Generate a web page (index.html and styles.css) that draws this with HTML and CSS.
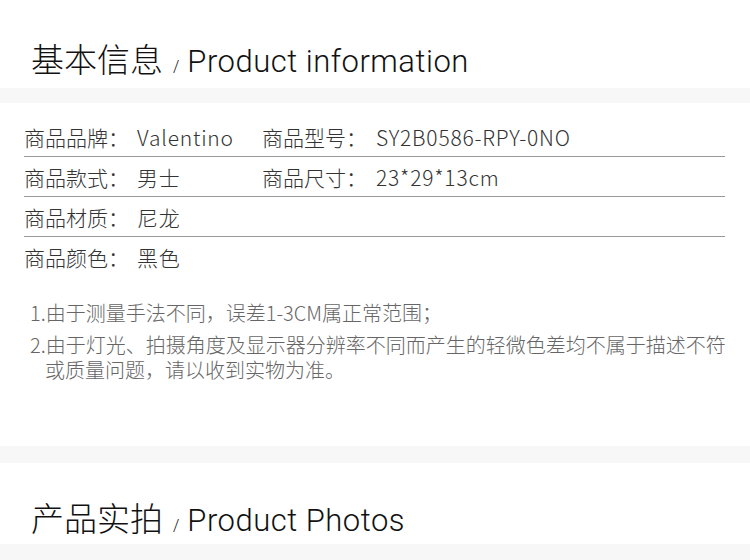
FILE: index.html
```html
<!DOCTYPE html>
<html lang="zh-CN">
<head>
<meta charset="utf-8">
<title>Product information</title>
<link rel="stylesheet" href="styles.css">
</head>
<body>
<section class="head head-first">
  <h2 class="title"><span class="cn">基本信息</span><span class="slash">/</span><span class="en">Product information</span></h2>
</section>
<div class="band band-a"></div>
<div class="specs">
  <div class="row">
    <span class="label">商品品牌：</span><span class="value">Valentino</span>
    <span class="label">商品型号：</span><span class="value">SY2B0586-RPY-0NO</span>
  </div>
  <div class="row">
    <span class="label">商品款式：</span><span class="value">男士</span>
    <span class="label">商品尺寸：</span><span class="value">23*29*13cm</span>
  </div>
  <div class="row">
    <span class="label">商品材质：</span><span class="value">尼龙</span>
  </div>
  <div class="row last">
    <span class="label">商品颜色：</span><span class="value">黑色</span>
  </div>
</div>
<div class="notes">
  <p class="note">1.由于测量手法不同，误差1-3CM属正常范围；</p>
  <p class="note">2.由于灯光、拍摄角度及显示器分辨率不同而产生的轻微色差均不属于描述不符或质量问题，请以收到实物为准。</p>
</div>
<div class="band band-b"></div>
<section class="head head-second">
  <h2 class="title"><span class="cn">产品实拍</span><span class="slash">/</span><span class="en">Product Photos</span></h2>
</section>
<div class="band band-c"></div>
</body>
</html>
```
FILE: styles.css
```css
html, body {
  margin: 0;
  padding: 0;
  background: #fff;
}
body {
  width: 750px;
  height: 560px;
  overflow: hidden;
  font-family: "Noto Sans CJK SC", "Noto Sans", sans-serif;
  color: #333;
}
.head {
  display: flex;
  align-items: flex-end;
  padding-left: 31px;
  box-sizing: border-box;
}
.head-first {
  height: 88px;
  padding-bottom: 8px;
}
.head-second {
  height: 81px;
  padding-bottom: 5px;
}
.title {
  margin: 0;
  font-weight: normal;
  display: flex;
  align-items: baseline;
  color: #111;
  line-height: 1.2;
}
.title .cn {
  font-family: "Noto Sans CJK SC", sans-serif;
  font-size: 33px;
  font-weight: 300;
}
.title .slash {
  font-family: Roboto, sans-serif;
  font-weight: 300;
  font-size: 16px;
  margin: 0 8px 0 10px;
}
.title .en {
  font-family: Roboto, sans-serif;
  font-weight: 300;
  font-size: 31px;
  letter-spacing: 0.5px;
}
.band {
  background: #f7f7f7;
}
.band-a { height: 15px; }
.band-b { height: 17px; }
.band-c { height: 17px; }
.specs {
  padding: 14px 25px 0 24px;
}
.row {
  display: grid;
  grid-template-columns: 113px 125px 114px 1fr;
  align-items: center;
  height: 39px;
  border-bottom: 1px solid #999;
  font-size: 21px;
  font-weight: 300;
  color: #333;
}
.row .value {
  letter-spacing: 0.8px;
}
.row.last {
  border-bottom: none;
}
.notes {
  padding: 24px 10px 0 45px;
  height: 170px;
  box-sizing: border-box;
  color: #666;
  font-size: 20px;
  font-weight: 300;
}
.note {
  margin: 0 0 7px 0;
  text-indent: -15px;
  line-height: 25px;
}
```
